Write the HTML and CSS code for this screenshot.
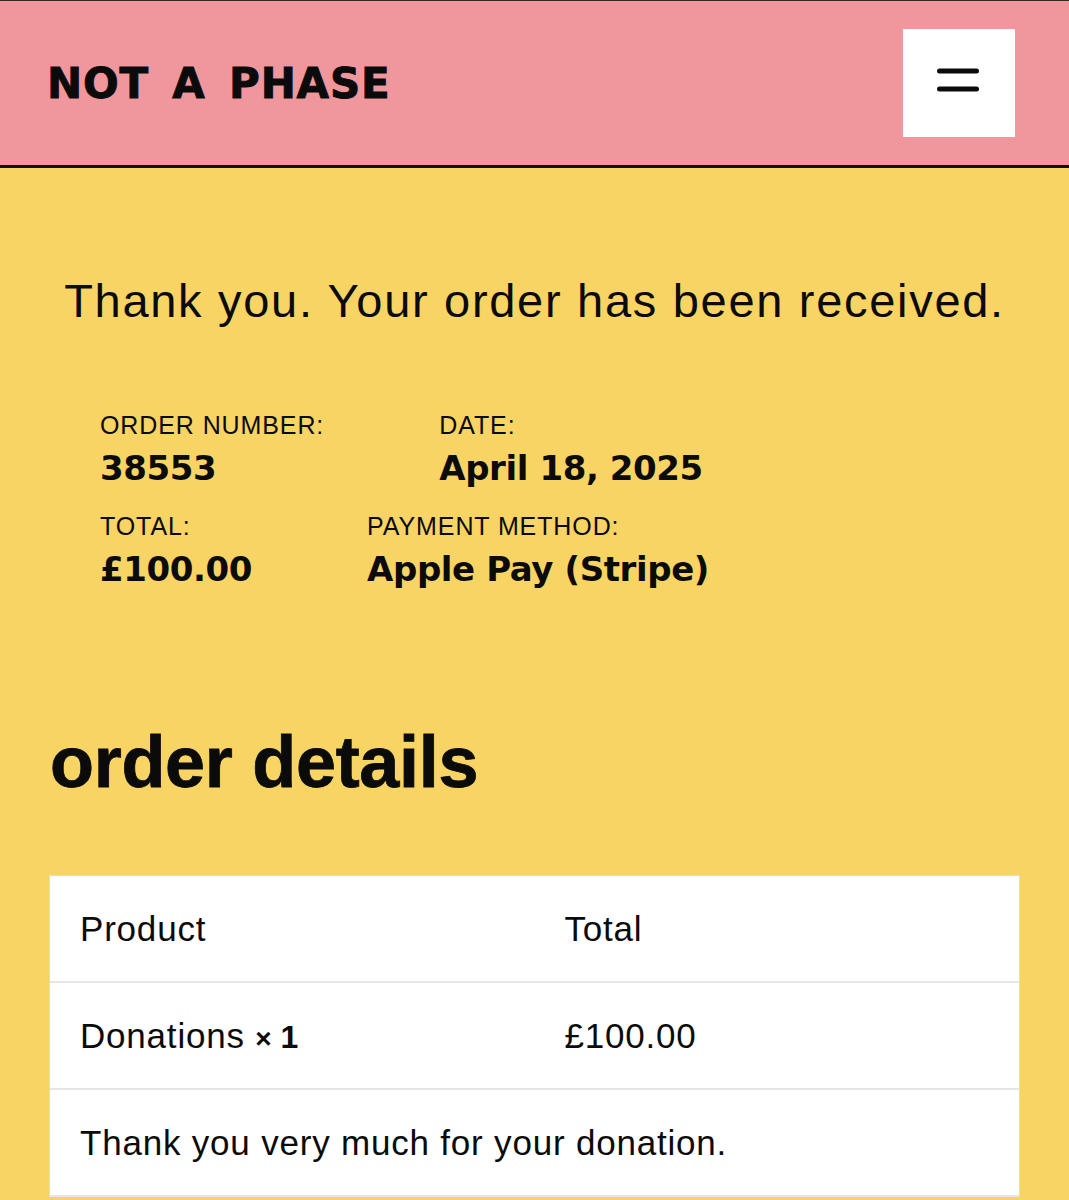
FILE: index.html
```html
<!DOCTYPE html>
<html lang="en">
<head>
<meta charset="utf-8">
<title>Order received – Not A Phase</title>
<link rel="stylesheet" href="styles.css">
</head>
<body>
<header class="site-header">
  <a class="logo" href="#">NOT A PHASE</a>
  <button class="menu-btn" aria-label="Menu">
    <svg width="44" height="26" viewBox="0 0 44 26" aria-hidden="true">
      <line x1="3.5" y1="4" x2="40.5" y2="4" stroke="#0b0b0b" stroke-width="5" stroke-linecap="round"/>
      <line x1="3.5" y1="22" x2="40.5" y2="22" stroke="#0b0b0b" stroke-width="5" stroke-linecap="round"/>
    </svg>
  </button>
</header>
<main class="content">
  <p class="notice">Thank you. Your order has been received.</p>
  <ul class="overview">
    <li class="overview-item"><span class="ov-label">Order number:</span><strong class="ov-value">38553</strong></li>
    <li class="overview-item"><span class="ov-label">Date:</span><strong class="ov-value">April 18, 2025</strong></li>
    <li class="overview-item"><span class="ov-label">Total:</span><strong class="ov-value">£100.00</strong></li>
    <li class="overview-item"><span class="ov-label">Payment method:</span><strong class="ov-value">Apple Pay (Stripe)</strong></li>
  </ul>
  <h2 class="section-title">order details</h2>
  <table class="order-table">
    <thead>
      <tr><th class="col">Product</th><th class="col">Total</th></tr>
    </thead>
    <tbody>
      <tr><td>Donations <strong class="qty"><span class="times">×</span> 1</strong></td><td>£100.00</td></tr>
      <tr><td colspan="2">Thank you very much for your donation.</td></tr>
    </tbody>
  </table>
</main>
</body>
</html>
```

FILE: styles.css
```css
* { box-sizing: border-box; }

html, body {
  margin: 0;
  padding: 0;
}

body {
  background: #f7d464;
  color: #0b0b0b;
  font-family: "Liberation Sans", Arial, sans-serif;
}

.site-header {
  display: flex;
  align-items: center;
  justify-content: space-between;
  height: 168px;
  padding: 0 54px 0 47px;
  background: #f0969d;
  border-top: 1px solid #3b2326;
  border-bottom: 3px solid #141010;
}

.logo {
  font-family: "DejaVu Sans", "Liberation Sans", sans-serif;
  font-weight: 700;
  font-size: 42px;
  letter-spacing: 0.8px;
  word-spacing: 8px;
  color: #0b0b0b;
  text-decoration: none;
  -webkit-text-stroke: 0.9px #0b0b0b;
}

.menu-btn {
  display: flex;
  align-items: center;
  justify-content: center;
  width: 112px;
  height: 108px;
  padding: 0 2px 6px 0;
  border: none;
  background: #ffffff;
}

.content {
  padding: 105px 50px 0;
}

.notice {
  margin: 0;
  font-size: 47px;
  line-height: 55px;
  letter-spacing: 1.7px;
  text-align: center;
}

.overview {
  list-style: none;
  margin: 81px 0 0;
  padding: 0 150px 0 50px;
  display: flex;
  flex-wrap: wrap;
  column-gap: 115px;
  row-gap: 15px;
}

.overview-item {
  display: flex;
  flex-direction: column;
}

.ov-label {
  font-size: 25px;
  line-height: 32px;
  letter-spacing: 0.9px;
  text-transform: uppercase;
}

.ov-value {
  font-family: "DejaVu Sans", "Liberation Sans", sans-serif;
  font-weight: 700;
  font-size: 34px;
  line-height: 54px;
  letter-spacing: -0.4px;
}

.section-title {
  margin: 123px 0 0;
  font-size: 72px;
  line-height: 86px;
  font-weight: 700;
  letter-spacing: -0.3px;
  -webkit-text-stroke: 0.8px #0b0b0b;
}

.order-table {
  width: 100%;
  margin-top: 71px;
  border-collapse: collapse;
  background: #ffffff;
  table-layout: fixed;
  outline: 1px solid #e4ddc6;
}

.order-table th,
.order-table td {
  padding: 31px 30px 30px;
  font-size: 35px;
  line-height: 44px;
  letter-spacing: 0.8px;
  font-weight: 400;
  text-align: left;
  border-bottom: 2px solid #e6e6e6;
}

.qty {
  font-weight: 700;
  letter-spacing: 0;
  font-size: 32px;
  line-height: 1;
}

.times {
  font-size: 28px;
  line-height: 1;
}
```
